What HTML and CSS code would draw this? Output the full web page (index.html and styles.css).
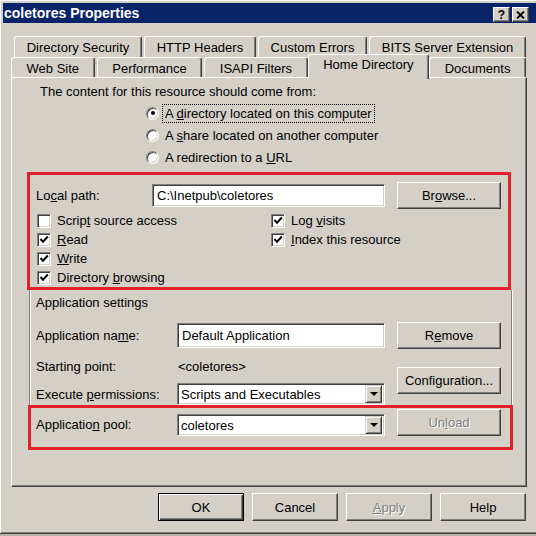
FILE: index.html
```html
<!DOCTYPE html>
<html>
<head>
<meta name="viewport" content="width=device-width, initial-scale=1">
<link rel="stylesheet" href="styles.css">
</head>
<body>

<div class="window">
  <div class="titlebar">
    <span class="title">coletores Properties</span>
    <div class="caption-btns">
      <span class="cap-btn">?</span>
      <span class="cap-btn">
        <svg width="9" height="8" viewBox="0 0 9 8"><path d="M1 0.5 L8 7.5 M8 0.5 L1 7.5" stroke="#000" stroke-width="1.8" fill="none"/></svg>
      </span>
    </div>
  </div>

  <div class="tabs">
    <div class="tab-row back">
      <div class="tab">Directory Security</div>
      <div class="tab">HTTP Headers</div>
      <div class="tab">Custom Errors</div>
      <div class="tab">BITS Server Extension</div>
    </div>
    <div class="tab-row front">
      <div class="tab">Web Site</div>
      <div class="tab">Performance</div>
      <div class="tab">ISAPI Filters</div>
      <div class="tab active">Home Directory</div>
      <div class="tab">Documents</div>
    </div>
  </div>

  <div class="panel">
    <div class="intro">The content for this resource should come from:</div>

    <div class="radios">
      <div class="radio-row"><span class="radio on"></span><span class="radio-label focus">A <u>d</u>irectory located on this computer</span></div>
      <div class="radio-row"><span class="radio"></span><span class="radio-label">A <u>s</u>hare located on another computer</span></div>
      <div class="radio-row"><span class="radio"></span><span class="radio-label">A redirection to a <u>U</u>RL</span></div>
    </div>

    <div class="redbox local">
      <div class="path-row">
        <span class="path-label">Lo<u>c</u>al path:</span>
        <div class="field path-field">C:\Inetpub\coletores</div>
        <button class="btn side-btn">Br<u>o</u>wse...</button>
      </div>
      <div class="checks">
        <div class="check-row"><span class="checkbox"></span><span>Scrip<u>t</u> source access</span></div>
        <div class="check-row"><span class="checkbox"><svg width="10" height="9" viewBox="0 0 10 9"><path d="M1.5 4 L4 6.8 L8.8 1.5" stroke="#000" stroke-width="2" fill="none"/></svg></span><span><u>R</u>ead</span></div>
        <div class="check-row"><span class="checkbox"><svg width="10" height="9" viewBox="0 0 10 9"><path d="M1.5 4 L4 6.8 L8.8 1.5" stroke="#000" stroke-width="2" fill="none"/></svg></span><span><u>W</u>rite</span></div>
        <div class="check-row"><span class="checkbox"><svg width="10" height="9" viewBox="0 0 10 9"><path d="M1.5 4 L4 6.8 L8.8 1.5" stroke="#000" stroke-width="2" fill="none"/></svg></span><span>Directory <u>b</u>rowsing</span></div>
        <div class="check-row"><span class="checkbox"><svg width="10" height="9" viewBox="0 0 10 9"><path d="M1.5 4 L4 6.8 L8.8 1.5" stroke="#000" stroke-width="2" fill="none"/></svg></span><span>Log <u>v</u>isits</span></div>
        <div class="check-row"><span class="checkbox"><svg width="10" height="9" viewBox="0 0 10 9"><path d="M1.5 4 L4 6.8 L8.8 1.5" stroke="#000" stroke-width="2" fill="none"/></svg></span><span><u>I</u>ndex this resource</span></div>
      </div>
    </div>

    <div class="appgroup">
      <div class="group-title">Application settings</div>
      <div class="app-grid">
        <span class="lbl">Application na<u>m</u>e:</span>
        <div class="field name-field">Default Application</div>
        <button class="btn side-btn">R<u>e</u>move</button>

        <span class="lbl">Starting point:</span>
        <span class="value">&lt;coletores&gt;</span>
        <button class="btn side-btn config-btn">Confi<u>g</u>uration...</button>

        <span class="lbl">Execute <u>p</u>ermissions:</span>
        <div class="field combo"><span class="combo-text">Scripts and Executables</span><span class="combo-btn"><span class="arrow"></span></span></div>
      </div>
    </div>

    <div class="redbox pool">
      <div class="pool-grid">
        <span class="lbl">Applicatio<u>n</u> pool:</span>
        <div class="field combo"><span class="combo-text">coletores</span><span class="combo-btn"><span class="arrow"></span></span></div>
        <button class="btn side-btn disabled">Un<u>l</u>oad</button>
      </div>
    </div>
  </div>

  <div class="footer">
    <button class="btn dlg-btn default">OK</button>
    <button class="btn dlg-btn">Cancel</button>
    <button class="btn dlg-btn disabled"><u>A</u>pply</button>
    <button class="btn dlg-btn">Help</button>
  </div>
</div>

</body>
</html>
```

FILE: styles.css
```css
* {box-sizing: border-box;}

body {
  margin: 0;
  background: #b8b4ac;
  font-family: "Liberation Sans", Arial, sans-serif;
  font-size: 13px;
  color: #000;
}

u {text-decoration: underline; text-underline-offset: 1px;}

.window {
  width: 536px;
  height: 534px;
  padding: 3px 0 0 3px;
  background: #d4d0c8;
  border-bottom: 1px solid #404040;
  box-shadow: inset 1px 1px #ffffff, inset 0 -1px #808080;
  overflow: hidden;
}

/* title bar */
.titlebar {
  height: 20px;
  background: #0a246a;
  display: flex;
  align-items: center;
  justify-content: space-between;
  padding: 0 7px 0 1px;
}

.title {
  color: #fff;
  font-weight: bold;
  font-size: 14px;
}

.caption-btns {
  display: flex;
  gap: 2px;
  margin-top: 3px;
}

.cap-btn {
  width: 17px;
  height: 15px;
  background: #d4d0c8;
  border: 1px solid;
  border-color: #fff #404040 #404040 #fff;
  box-shadow: inset -1px -1px #808080;
  display: flex;
  align-items: center;
  justify-content: center;
  font-weight: bold;
  font-size: 12px;
  line-height: 1;
}

/* tabs */
.tabs {
  margin-top: 13px;
}

.tab-row {
  display: flex;
  gap: 2px;
}

.tab-row.back {
  margin-left: 11px;
  width: 512px;
  height: 21px;
}

.tab-row.front {
  margin-left: 8px;
  width: 515px;
  height: 20px;
}

.tab {
  flex: 1 1 auto;
  text-align: center;
  white-space: nowrap;
  border: 1px solid;
  border-bottom: none;
  border-color: #fff #404040 #404040 #fff;
  box-shadow: inset -1px 0 #808080;
  border-radius: 3px 3px 0 0;
  padding-top: 3px;
  background: #d4d0c8;
}

.tab.active {
  position: relative;
  z-index: 1;
  height: 25px;
  margin: -3px -2px 0 -2px;
  padding-top: 2px;
}

/* panel */
.panel {
  margin-left: 8px;
  width: 516px;
  height: 410px;
  border: 1px solid;
  border-color: #fff #404040 #404040 #fff;
  box-shadow: inset -1px -1px #808080;
}

.intro {
  margin: 6px 0 0 28px;
  line-height: 15px;
}

.radios {
  margin: 3px 0 0 134px;
}

.radio-row {
  height: 22px;
  display: flex;
  align-items: center;
  gap: 3px;
}

.radio {
  width: 13px;
  height: 13px;
  border-radius: 50%;
  border: 1px solid;
  border-color: #808080 #fff #fff #808080;
  box-shadow: inset 1px 1px #404040, inset -1px -1px #d4d0c8;
  background: #fff;
  display: flex;
  align-items: center;
  justify-content: center;
}

.radio.on::after {
  content: "";
  width: 4px;
  height: 4px;
  border-radius: 50%;
  background: #000;
}

.radio-label {
  padding: 1px 2px;
  border: 1px solid transparent;
}

.radio-label.focus {
  border: 1px dotted #000;
}

/* red markup boxes */
.redbox {
  border: 3px solid #e4202a;
}

.redbox.local {
  margin: 4px 0 0 15px;
  width: 484px;
  padding: 7px 0 0 6px;
}

.path-row {
  height: 27px;
  display: flex;
  align-items: center;
}

.path-label {
  width: 116px;
}

.field {
  background: #fff;
  border: 1px solid;
  border-color: #808080 #fff #fff #808080;
  box-shadow: inset 1px 1px #404040, inset -1px -1px #d4d0c8;
  padding: 0 4px;
  display: flex;
  align-items: center;
  white-space: nowrap;
}

.path-field {
  width: 233px;
  height: 23px;
}

.btn {
  font: inherit;
  color: #000;
  background: #d4d0c8;
  border: 1px solid;
  border-color: #fff #404040 #404040 #fff;
  box-shadow: inset -1px -1px #808080;
  padding: 0;
}

.btn.disabled {
  color: #808080;
  text-shadow: 1px 1px #fff;
}

.side-btn {
  width: 104px;
  height: 27px;
  margin-left: 12px;
}

.checks {
  margin-top: 2px;
  display: grid;
  grid-template-columns: 234px 1fr;
  grid-template-rows: repeat(4, 19px);
  grid-auto-flow: column;
}

.check-row {
  display: flex;
  align-items: center;
  padding-left: 1px;
}

.checkbox {
  width: 14px;
  height: 14px;
  margin-right: 6px;
  background: #fff;
  border: 1px solid;
  border-color: #808080 #fff #fff #808080;
  box-shadow: inset 1px 1px #404040, inset -1px -1px #d4d0c8;
  display: flex;
  align-items: center;
  justify-content: center;
}

/* application settings */
.appgroup {
  margin-left: 17px;
  width: 483px;
  padding: 5px 0 0 6px;
  border-left: 1px solid #808080;
  border-right: 1px solid #808080;
  box-shadow: inset 1px 0 #fff, 1px 0 #fff;
}

.group-title {
  line-height: 15px;
}

.app-grid {
  margin-top: 12px;
  display: grid;
  grid-template-columns: 141px 208px 116px;
  grid-template-rows: 27px 34px 22px;
  align-items: center;
}

.app-grid .side-btn {
  justify-self: end;
}

.name-field {
  height: 25px;
}

.value {
  padding-left: 1px;
}

.config-btn {
  grid-row: 2 / 4;
  grid-column: 3;
  align-self: start;
  margin-top: 18px;
}

.combo {
  height: 22px;
  padding: 0 2px 0 3px;
  justify-content: space-between;
}

.combo-btn {
  width: 17px;
  height: 18px;
  background: #d4d0c8;
  border: 1px solid;
  border-color: #d4d0c8 #404040 #404040 #d4d0c8;
  box-shadow: inset 1px 1px #fff, inset -1px -1px #808080;
  display: flex;
  align-items: center;
  justify-content: center;
}

.arrow {
  width: 0;
  height: 0;
  border-left: 4px solid transparent;
  border-right: 4px solid transparent;
  border-top: 4px solid #000;
}

.redbox.pool {
  margin-left: 16px;
  width: 485px;
  padding: 1px 0 11px 5px;
}

.pool-grid {
  display: grid;
  grid-template-columns: 141px 208px 116px;
  grid-template-rows: 27px;
  align-items: end;
}

.pool-grid .lbl {
  line-height: 22px;
}

.pool-grid .side-btn {
  justify-self: end;
}

/* dialog buttons */
.footer {
  margin-top: 6px;
  display: flex;
  justify-content: flex-end;
  gap: 8px;
  padding-right: 10px;
}

.dlg-btn {
  width: 86px;
  height: 28px;
}

.dlg-btn.default {
  border: 1px solid #000;
  box-shadow: inset 1px 1px #fff, inset -1px -1px #404040, inset -2px -2px #808080;
}
```
